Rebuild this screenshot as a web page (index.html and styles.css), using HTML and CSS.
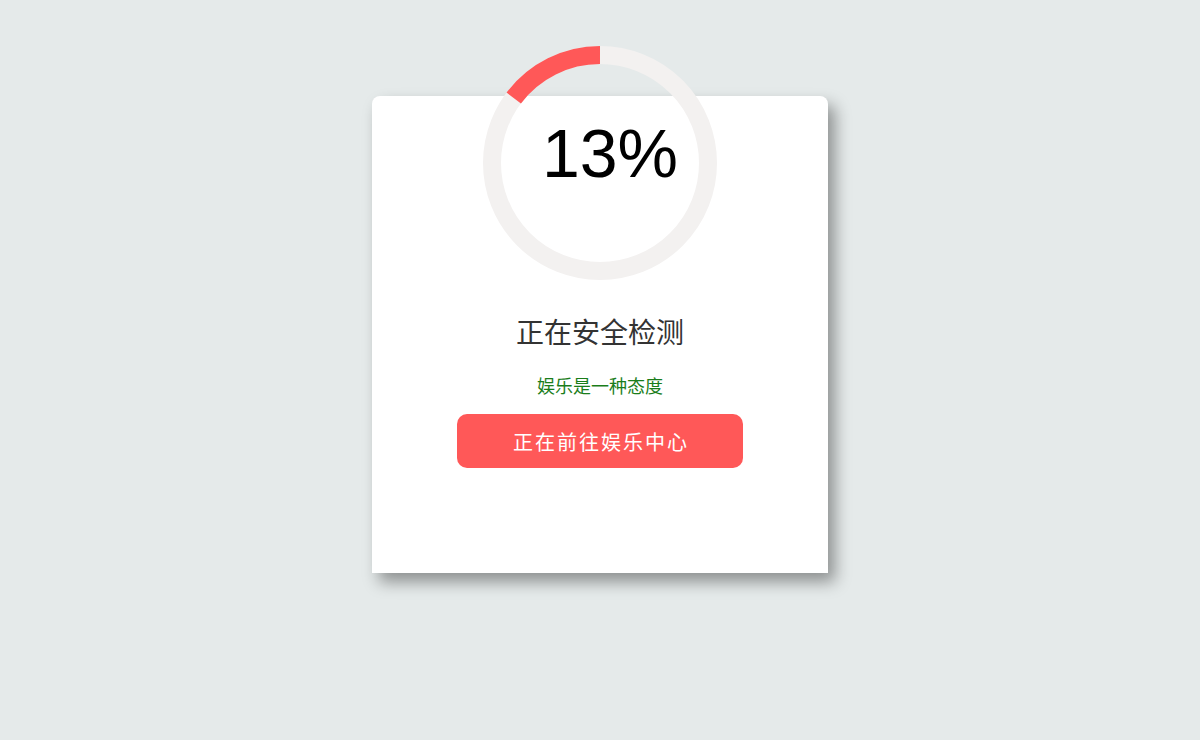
FILE: index.html
```html
<!DOCTYPE html>
<html lang="zh-CN">
<head>
<meta charset="utf-8">
<title>正在安全检测</title>
<link rel="stylesheet" href="styles.css">
</head>
<body>
<div class="card">
  <div class="ring">
    <svg class="ring-svg" viewBox="0 0 234 234" width="234" height="234">
      <circle cx="117" cy="117" r="108" fill="none" stroke="#f3f1f0" stroke-width="18"/>
      <path d="M117 9 A108 108 0 0 0 30.75 52" fill="none" stroke="#ff5858" stroke-width="18"/>
    </svg>
    <div class="percent">13%</div>
  </div>
  <h1 class="title">正在安全检测</h1>
  <p class="subtitle">娱乐是一种态度</p>
  <a class="btn">正在前往娱乐中心</a>
</div>
</body>
</html>
```

FILE: styles.css
```css
html, body {
  margin: 0;
  padding: 0;
}
body {
  background: #e5eaea;
  font-family: "Liberation Sans", "Noto Sans CJK SC", sans-serif;
  height: 740px;
  overflow: hidden;
}
.card {
  width: 456px;
  height: 477px;
  margin: 96px auto 0;
  background: #fff;
  border-radius: 8px 8px 0 0;
  box-shadow: 7px 9px 16px rgba(0, 0, 0, 0.38);
  display: flex;
  flex-direction: column;
  align-items: center;
}
.ring {
  width: 234px;
  height: 234px;
  margin-top: -50px;
  position: relative;
  flex-shrink: 0;
}
.ring-svg {
  display: block;
}
.percent {
  position: absolute;
  left: 0;
  top: 0;
  width: 100%;
  height: 100%;
  display: flex;
  align-items: center;
  justify-content: center;
  padding-left: 20px;
  padding-bottom: 20px;
  box-sizing: border-box;
  font-family: "Liberation Sans", Arial, sans-serif;
  font-size: 68px;
  color: #000;
}
.title {
  margin: 31px 0 0;
  font-family: "Noto Sans CJK SC", sans-serif;
  font-weight: 400;
  font-size: 28px;
  line-height: 40px;
  color: #333;
}
.subtitle {
  margin: 22px 0 0;
  font-family: "Noto Sans CJK SC", sans-serif;
  font-size: 18px;
  line-height: 24px;
  color: #1a7d1a;
}
.btn {
  margin-top: 17px;
  width: 286px;
  height: 54px;
  border-radius: 10px;
  background: #ff5858;
  color: #fff;
  display: flex;
  align-items: center;
  justify-content: center;
  font-family: "Noto Sans CJK SC", sans-serif;
  font-size: 20px;
  letter-spacing: 2px;
  text-indent: 2px;
}
```
